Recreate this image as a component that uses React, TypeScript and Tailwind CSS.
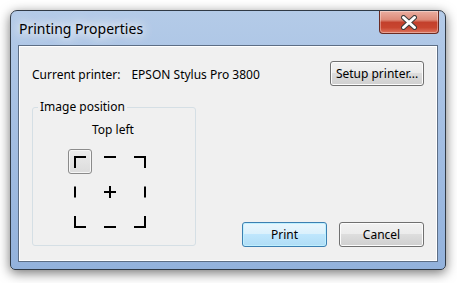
import { useState } from 'react';

const font = { fontFamily: '"Noto Sans", "Open Sans", sans-serif' };

// 12x12 glyphs for the nine anchor positions
const positions = [
  { name: 'Top left', d: 'M1 12V1H12' },
  { name: 'Top', d: 'M0 1H12' },
  { name: 'Top right', d: 'M0 1H11V12' },
  { name: 'Left', d: 'M1 0.5V11.5' },
  { name: 'Center', d: 'M0 6H12M6 0V12' },
  { name: 'Right', d: 'M11 0.5V11.5' },
  { name: 'Bottom left', d: 'M1 0V11H12' },
  { name: 'Bottom', d: 'M0 11H12' },
  { name: 'Bottom right', d: 'M0 11H11V0' },
];

function CloseButton() {
  return (
    <button className="w-[60px] h-[23px] mr-[6px] self-start rounded-b-[4px] border border-t-0 border-[#6b2b22] bg-[linear-gradient(to_bottom,#eaaea1_0%,#dd8a78_40%,#c3402c_52%,#c8452f_75%,#dd7560_100%)] shadow-[inset_0_0_0_1px_rgba(255,255,255,0.35)] flex items-center justify-center">
      <svg width="16" height="15" viewBox="0 0 16 15">
        <path d="M2.5 2.5L13.5 12.5M13.5 2.5L2.5 12.5" stroke="#3b3b3b" strokeWidth="5" strokeLinecap="round" />
        <path d="M2.5 2.5L13.5 12.5M13.5 2.5L2.5 12.5" stroke="#ffffff" strokeWidth="3" strokeLinecap="round" />
      </svg>
    </button>
  );
}

function Button({ label, primary, className = '' }: { label: string; primary?: boolean; className?: string }) {
  return (
    <button
      className={
        primary
          ? `h-[25px] rounded-[3px] border border-[#3c7fb1] bg-[linear-gradient(to_bottom,#eaf6fd_0%,#d9f0fc_50%,#bee6fd_50%,#b0ddf5_100%)] shadow-[inset_0_0_0_1px_#bff0ff] text-[12px] text-black ${className}`
          : `h-[25px] rounded-[3px] border border-[#707070] bg-[linear-gradient(to_bottom,#f2f2f2_0%,#ebebeb_50%,#dddddd_50%,#cfcfcf_100%)] shadow-[inset_0_0_0_1px_#fcfcfc] text-[12px] text-black ${className}`
      }
    >
      {label}
    </button>
  );
}

export default function App() {
  const [selected, setSelected] = useState(0);

  return (
    <div className="w-[457px] h-[283px] bg-white pt-[10px] pl-[10px]" style={font}>
      <div className="w-[436px] h-[260px] flex flex-col rounded-t-[7px] rounded-b-[5px] border border-[#303a46] bg-[linear-gradient(to_bottom,#b4cbe8_0%,#a6c0e3_40%,#93b2dc_100%)] shadow-[0_3px_12px_rgba(0,0,0,0.55)]">
        {/* Title bar */}
        <div className="h-[34px] flex items-center justify-between">
          <span className="pl-[8px] pt-[1px] text-[14px] text-black [text-shadow:0_0_8px_#fff,0_0_14px_#fff,0_0_20px_#fff]">
            Printing Properties
          </span>
          <CloseButton />
        </div>

        {/* Client area */}
        <div className="flex-1 mx-[7px] mb-[7px] border border-[#5d6e85] bg-[#f0f0f0] shadow-[inset_0_0_0_1px_#ffffff] flex flex-col px-[13px] pt-[15px] text-[12px] text-black">
          <div className="h-[25px] flex items-center justify-between">
            <div className="flex items-center pt-[2px]">
              <span>Current printer:</span>
              <span className="ml-[11px]">EPSON Stylus Pro 3800</span>
            </div>
            <Button label="Setup printer..." className="w-[94px]" />
          </div>

          <div className="mt-[13px] flex items-end justify-between">
            <fieldset className="w-[164px] h-[147px] rounded-[3px] border border-[#d5dfe5]">
              <legend className="ml-[5px] px-[2px] leading-[16px]">Image position</legend>
              <div className="mt-[7px] text-center leading-[16px] pr-[2px]">{positions[selected].name}</div>
              <div className="mt-[11px] ml-[35px] grid grid-cols-[24px_24px_24px] gap-x-[6px] gap-y-[5px]">
                {positions.map((p, i) => (
                  <button
                    key={p.name}
                    onClick={() => setSelected(i)}
                    className={
                      i === selected
                        ? 'w-[24px] h-[25px] rounded-[3px] border border-[#8b8b8b] bg-[linear-gradient(to_bottom,#ececec,#dcdcdc)] shadow-[inset_0_0_0_1px_#f6f6f6] flex items-center justify-center'
                        : 'w-[24px] h-[25px] border border-transparent flex items-center justify-center'
                    }
                  >
                    <svg width="12" height="12" viewBox="0 0 12 12" fill="none">
                      <path d={p.d} stroke="#000" strokeWidth="2" />
                    </svg>
                  </button>
                ))}
              </div>
            </fieldset>

            <div className="flex gap-[12px] mb-[-1px]">
              <Button label="Print" primary className="w-[85px]" />
              <Button label="Cancel" className="w-[85px]" />
            </div>
          </div>
        </div>
      </div>
    </div>
  );
}
